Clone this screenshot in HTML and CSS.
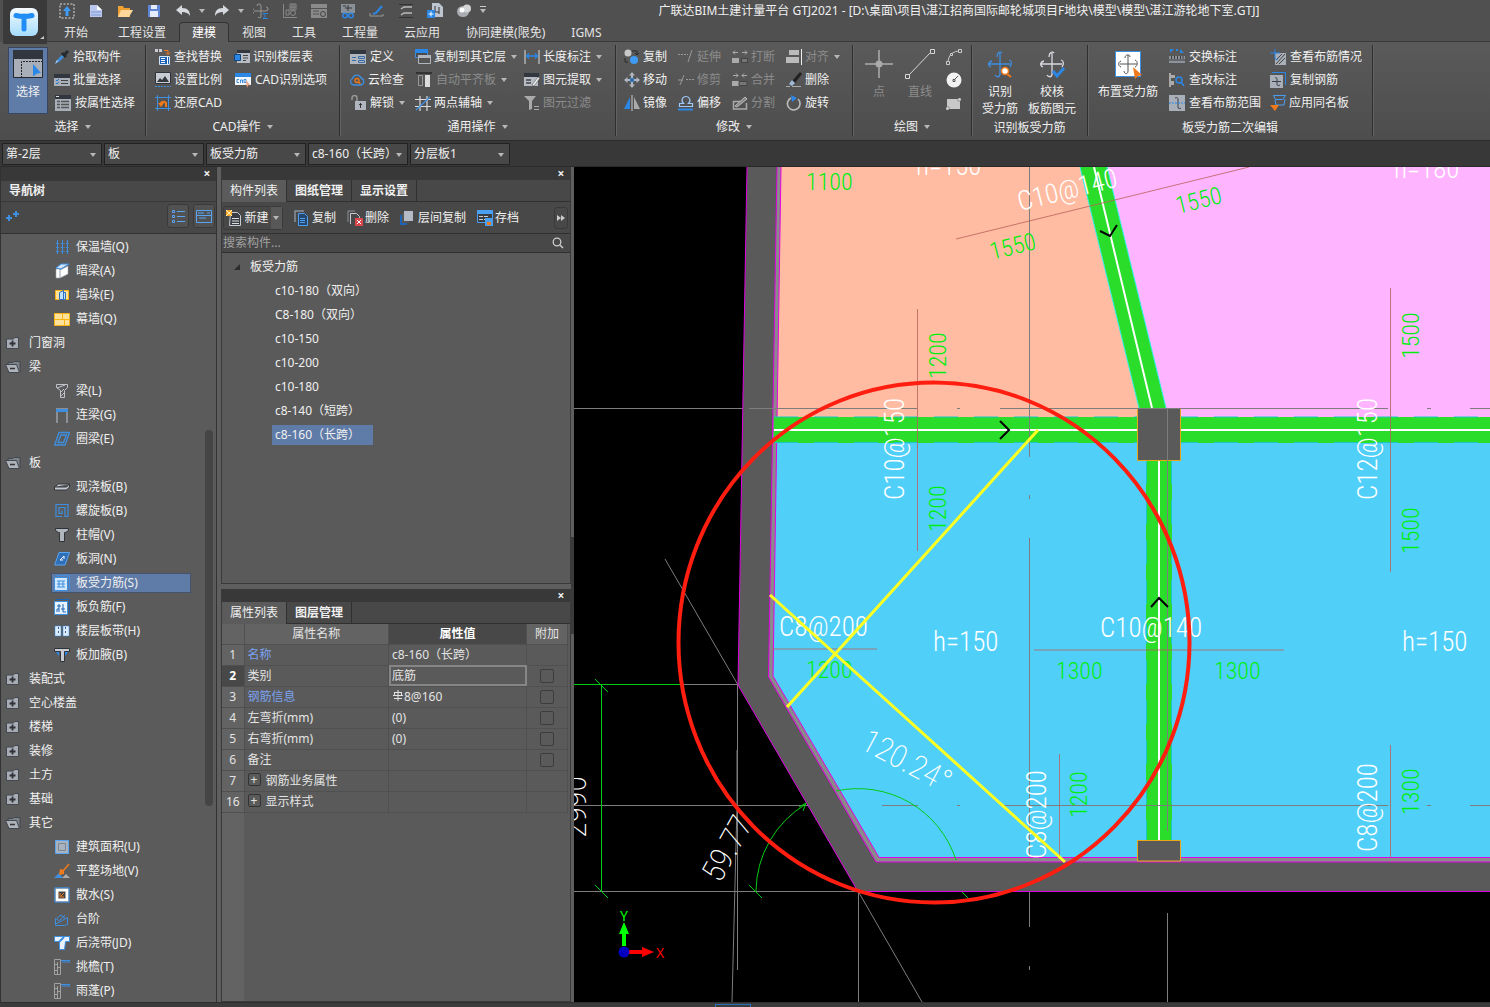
FILE: index.html
```html
<!DOCTYPE html>
<html lang="zh-CN">
<head>
  <meta charset="UTF-8">
  <meta name="viewport" content="width=device-width, initial-scale=1.0">
  <title>广联达BIM土建计量平台 GTJ2021</title>
  <link rel="stylesheet" href="styles.css">
</head>
<body>
  <!-- icon sprite -->
  <svg class="sprite" aria-hidden="true">
    <symbol id="i-pick" viewBox="0 0 16 16"><path d="M1 15l2-4 6-6 2 2-6 6z" fill="#3f8fe0"/><path d="M1 15l2-4 1 1z" fill="#ddd"/><path d="M8 4l4 4M10 6l4-4" stroke="#26292e" stroke-width="3"/></symbol>
    <symbol id="i-batch" viewBox="0 0 16 16"><path fill="#a9afb9" d="M0 2h16v12H0z"/><path fill="#32373f" d="M0 2h16v4H0z"/><path d="M2 8l1 1 2-2M2 11l1 1 2-2" stroke="#1d78d0" fill="none"/><path d="M7 8.500h7M7 11.500h7" stroke="#444"/></symbol>
    <symbol id="i-list" viewBox="0 0 16 16"><path fill="#a9afb9" d="M0 1h16v15H0z"/><path fill="#32373f" d="M0 0h16v4H0z"/><path d="M1 1.500h3" stroke="#ddd"/><path d="M2 6.500h3m1 0h8M2 9.500h3m1 0h8M2 12.500h3m1 0h8" stroke="#555" stroke-width="1.500"/></symbol>
    <symbol id="i-find" viewBox="0 0 16 16"><path fill="#c8ccd2" d="M0 0h3v3H0zm4 0h3v3H4z"/><path d="M9 1.500h4v4M11 3.500l2 2 2-2" stroke="#f07a1c" fill="none"/><path d="M4.500 7.500h10v8h-10z" fill="#1c63b5" stroke="#cfe3fa"/><path d="M6 9.500h4M6 11.500h4M6 13.500h4M12.500 8v7" stroke="#fff"/></symbol>
    <symbol id="i-scale" viewBox="0 0 16 16"><path fill="#c8ccd2" stroke="#2f343b" d="M.5.5h15v11H.5z"/><path d="M2 10l3-4 2 2 3-4 4 6z" fill="#33383f"/><path d="M0 14.500h16" stroke="#3f8fe0" stroke-dasharray="2 1"/></symbol>
    <symbol id="i-restore" viewBox="0 0 16 16"><path d="M2.500 0v16M13.500 0v16M0 2.500h16M0 13.500h16" stroke="#3f8fe0"/><path d="M11 12V8a3 3 0 0 0-5 0v2" stroke="#f07a1c" stroke-width="2" fill="none"/><path d="M3 8h6l-3 4z" fill="#f07a1c"/></symbol>
    <symbol id="i-floor" viewBox="0 0 16 16"><path fill="#b6bbc4" d="M3 2h13v12H3z"/><path fill="#32373f" d="M3 1h13v3H3z"/><path d="M9 6.500h5M9 9h5M9 11.500h3" stroke="#444"/><path fill="#2b87e6" stroke="#12467e" d="M.5 5.500h6v6h-6z"/></symbol>
    <symbol id="i-cad" viewBox="0 0 16 16"><path fill="#f1f4f8" d="M0 1h16v12H0z"/><path fill="#2b87e6" d="M0 1h16v4H0z"/><path d="M4 7.500H2v3h2M5.500 11V8h2v3M9 7.500v3h2v-3z" fill="none" stroke="#3f8fe0"/><path d="M11 8l4 5-2 .5L12 16z" fill="#f4a27a"/></symbol>
    <symbol id="i-define" viewBox="0 0 16 16"><path fill="#b0b5be" d="M0 2h16v13H0z"/><path fill="#32373f" d="M0 1h16v4H0z"/><path d="M2 8.500h4M2 11.500h4M8.500 7.500h6v2h-6zM8.500 11.500h6v2h-6z" fill="none" stroke="#3b6ea8"/></symbol>
    <symbol id="i-cloud" viewBox="0 0 16 16"><path d="M4 13a3.500 3.500 0 0 1-.5-6.500A4.500 4.500 0 0 1 12 6a3.600 3.600 0 0 1 0 7z" fill="none" stroke="#3f8fe0" stroke-width="1.300"/><circle cx="8" cy="8.500" r="2" fill="none" stroke="#f07a1c" stroke-width="1.300"/><path d="M9.500 10l2 2" stroke="#f07a1c" stroke-width="1.300"/></symbol>
    <symbol id="i-unlock" viewBox="0 0 16 16"><path d="M2 5V3a2 2 0 0 1 5 0v4" stroke="#999" fill="none" stroke-width="1.500"/><path fill="#b0b5be" d="M5 6h11v9H5z"/><path d="M10.500 8v5M9 9.500h3" stroke="#333"/></symbol>
    <symbol id="i-copyfloor" viewBox="0 0 16 16"><path d="M.5 1.500h12v7H.5z" fill="#4b4b4b" stroke="#3f8fe0"/><path fill="#2b87e6" d="M0 0h13v4H0z"/><path d="M3.500 6.500h12v8h-12z" fill="#555" stroke="#b0b5be"/><path fill="#b0b5be" d="M3 6h13v3H3z"/></symbol>
    <symbol id="i-align" viewBox="0 0 16 16"><path d="M0 1h16" stroke="#333" stroke-width="2"/><path d="M2.500 3.500h4v10h-4z" fill="none" stroke="#999"/><path fill="#ddd" d="M9 3h5v12H9z"/></symbol>
    <symbol id="i-axis" viewBox="0 0 16 16"><path d="M5 1v15M12 1v15M0 4.500h16M0 11.500h16" stroke="#ddd" stroke-width="1.200"/><path d="M1 15L15 2" stroke="#3f8fe0" stroke-width="1.300"/></symbol>
    <symbol id="i-length" viewBox="0 0 16 16"><path d="M1 1v14M15 1v14" stroke="#ddd"/><path d="M2 7h12M5 4.500L2.500 7 5 9.500M11 4.500L13.500 7 11 9.500" fill="none" stroke="#2b87e6" stroke-width="1.300"/></symbol>
    <symbol id="i-extract" viewBox="0 0 16 16"><path fill="#b6bbc4" d="M0 3h14v11H0z"/><path fill="#32373f" d="M0 1h15v4H0z"/><path d="M2 8h5M2 11h5" stroke="#444" stroke-width="1.500"/><path d="M8 13l6-8 2 1-6 8z" fill="#eee" stroke="#444" stroke-width=".5"/></symbol>
    <symbol id="i-filter" viewBox="0 0 16 16"><path fill="#aaa" d="M0 1h12L8 6v8l-3 1V6z"/><path d="M10 11.500h5M10 14.500h5" stroke="#aaa"/></symbol>
    <symbol id="i-copy2" viewBox="0 0 16 16"><circle cx="4" cy="4" r="3.500" fill="#c8c8c8"/><circle cx="10" cy="11" r="4" fill="#3e9bf4"/><path d="M8 2h5v4M11 4l2 2 2-2M1 9v4h3" fill="none" stroke="#2a2a2a"/></symbol>
    <symbol id="i-move" viewBox="0 0 16 16"><path fill="#b0b5be" d="M8 0l3 3.500H9V6H7V3.500H5zM8 16l3-3.500H9V10H7v2.500H5zM0 8l3.500-3v2H6v2H3.500v2zM16 8l-3.500-3v2H10v2h2.500v2z"/><path fill="none" stroke="#2b87e6" d="M6.500 6.500h3v3h-3z"/></symbol>
    <symbol id="i-mirror" viewBox="0 0 16 16"><path fill="#2b87e6" d="M6 2v12H0z"/><path fill="#aaa" d="M10 2v12h6z"/><path d="M8 0v16" stroke="#ccc"/></symbol>
    <symbol id="i-extend" viewBox="0 0 16 16"><path d="M0 5.500h10" stroke="#999" stroke-dasharray="2 1"/><path d="M10 13l4-12" stroke="#999"/></symbol>
    <symbol id="i-trim" viewBox="0 0 16 16"><path d="M8 7.500h8" stroke="#999" stroke-dasharray="2 1"/><path d="M2 13L6 3M0 8h5" stroke="#999"/></symbol>
    <symbol id="i-offset" viewBox="0 0 16 16"><path d="M1.500 11.500v-3h4c-3-3-1-7 2.500-7s5.500 4 2.500 7h4v3z" fill="none" stroke="#9ec9f8" stroke-width="1.200"/><path d="M0 14.500h15" stroke="#2b87e6" stroke-width="2"/></symbol>
    <symbol id="i-break" viewBox="0 0 16 16"><path fill="#aaa" d="M0 9h7v5H0z"/><path d="M9.500 9.500h6v4h-6z" fill="#777" stroke="#444"/><path d="M1 3.500h5M3 1.500l-2 2 2 2M10 3.500h5M13 1.500l2 2-2 2" stroke="#aaa" fill="none"/></symbol>
    <symbol id="i-merge" viewBox="0 0 16 16"><path fill="#aaa" d="M0 9h7v5H0z"/><path d="M7 9.500h8v4H7z" fill="#777" stroke="#444"/><path d="M1 3.500h5M4 1.500l2 2-2 2M10 3.500h5M12 1.500l-2 2 2 2" stroke="#aaa" fill="none"/></symbol>
    <symbol id="i-split" viewBox="0 0 16 16"><path d="M9 6.500H1.500v7.500h13V8" fill="none" stroke="#aaa" stroke-width="1.500"/><path d="M3 11l10-9 2 2-10 8z" fill="#888" stroke="#bbb"/></symbol>
    <symbol id="i-alignto" viewBox="0 0 16 16"><path fill="#bbb" d="M3 1h10v5H3zM0 8h13v6H0z"/><path d="M15.500 0v16" stroke="#eee"/></symbol>
    <symbol id="i-erase" viewBox="0 0 16 16"><path d="M6 9l8-9 2 2-7 9z" fill="#222"/><path d="M3 12l3-4 3 3-3 3z" fill="#9fb9d8"/><path d="M0 14.500h4m2 0h9" stroke="#aaa"/></symbol>
    <symbol id="i-rotate" viewBox="0 0 16 16"><path d="M5 3a6.300 6.300 0 1 0 7 1" fill="none" stroke="#bbb" stroke-width="1.600"/><path fill="#2b87e6" d="M5 0l6 3-5 4z"/></symbol>
    <symbol id="i-swap" viewBox="0 0 16 16"><path fill="#2b87e6" d="M1 0h4l-4 4zM11 0v4h4zM7 0h2v2H7z"/><path fill="#8d929b" d="M0 7h16v7H0z"/><path d="M2.500 7v3M5.500 7v3M8.500 7v3M11.500 7v3M14 7v3M0 11h16" stroke="#3c3c3c"/></symbol>
    <symbol id="i-check" viewBox="0 0 16 16"><path d="M1 1v14" stroke="#aaa" stroke-width="2"/><path fill="#aaa" d="M2 3h4v3H2zM2 9h3v4H2z"/><circle cx="10" cy="8" r="3" fill="none" stroke="#2b87e6" stroke-width="1.500"/><path d="M12 10l3 4" stroke="#2b87e6" stroke-width="1.500"/></symbol>
    <symbol id="i-range" viewBox="0 0 16 16"><path fill="#a9afb9" d="M0 0h16v16H0z"/><path d="M6 3c2-1 3 0 3 1v8c0 2 2 2 3 1" stroke="#3b4048" fill="none"/><path d="M0 8h16" stroke="#2b87e6" stroke-dasharray="2 1"/></symbol>
    <symbol id="i-state" viewBox="0 0 16 16"><path fill="#a9afb9" d="M5 4h11v12H5z"/><path d="M6 15l9-10M9 15l6-6M6 11l6-6" stroke="#444"/><path d="M5 0v9c0 2 2 2 3 1M0 4h10" stroke="#2b87e6" fill="none"/></symbol>
    <symbol id="i-copyrebar" viewBox="0 0 16 16"><path fill="#a9afb9" d="M0 3h13v13H0z"/><path d="M2 .5h13.500V13" stroke="#2b87e6" fill="none"/><path d="M5 6c1-1 2 0 2 1v5c0 2 1 2 3 1M2 9.500h9" stroke="#3b4048" fill="none"/></symbol>
    <symbol id="i-samename" viewBox="0 0 16 16"><path d="M3.500.5h12l-3 4h-7zM5 5l1 5h8l1-6" fill="none" stroke="#4b9ff2"/><path fill="#f07a1c" d="M0 10h9l-4 6z"/></symbol>
    <symbol id="i-open" viewBox="0 0 16 16"><path fill="#7d838c" stroke="#42464d" d="M3 3.500h5l1-1h6v11H4z"/><path fill="#aeb2ba" stroke="#42464d" d="M.5 5.500h11l3 8H4z"/><path d="M5 9.500h5" stroke="#333" stroke-width="1.500"/></symbol>
    <symbol id="i-closed" viewBox="0 0 16 16"><path fill="#a7acb5" stroke="#42464d" d="M1.500 4h7l1-1.500h4v11h-12z"/><path d="M7.500 5.500v6M4.500 8.500h6" stroke="#2f3339" stroke-width="1.800"/></symbol>
    <symbol id="i-wallq" viewBox="0 0 16 16"><path d="M3.500 1v14M8.500 1v14M13.500 1v14" stroke="#3f8fe0"/><path d="M2 4.500h13M2 8.500h13M2 12.500h13" stroke="#3f8fe0" stroke-dasharray="1 1.500"/></symbol>
    <symbol id="i-cube" viewBox="0 0 16 16"><path fill="#fff" stroke="#9aa3b0" stroke-width=".6" d="M2 6h4v9H2zM6 7l8-4v8l-8 4z"/><path fill="#cfe3fa" stroke="#3f8fe0" d="M2 5l5-4h8L7 6z"/></symbol>
    <symbol id="i-pier" viewBox="0 0 16 16"><path fill="#ffe29a" stroke="#fbb415" d="M1.500 3.500h13v9h-13z"/><path fill="#bfe0ff" stroke="#2b6fc0" d="M5.500 5.500l4-2v9h-4zM9.500 5.500h2v7h-2z"/></symbol>
    <symbol id="i-brick" viewBox="0 0 16 16"><path fill="#ffe29a" stroke="#fbb415" d="M.5 2.500h15v12H.5zM.5 8.500h15M8.500 2.500v6M10.500 8.500v6"/></symbol>
    <symbol id="i-beam" viewBox="0 0 16 16"><path fill="none" stroke="#c0c4ca" d="M2.500 1.500h11v3l-3 3v7h-4v-7l-4-3zM3 5l8-3M7 9l3-3M7 13l3-3"/></symbol>
    <symbol id="i-lintel" viewBox="0 0 16 16"><path fill="none" stroke="#8a9096" stroke-width="2" d="M3 16V2h10v14"/><path fill="#3f8fe0" d="M2 2h12v3H2z"/></symbol>
    <symbol id="i-ring" viewBox="0 0 16 16"><path fill="none" stroke="#3f8fe0" stroke-width="1.300" d="M5 1.500h10.500L11 14H.7zM7 4h5.500L9.500 11.500H4z"/></symbol>
    <symbol id="i-slab" viewBox="0 0 16 16"><path fill="#c4c8cf" stroke="#33373d" d="M.5 8l4-3h11v3l-3 3H.5zM.5 8h12l3-3"/></symbol>
    <symbol id="i-spiral" viewBox="0 0 16 16"><path fill="none" stroke="#3f8fe0" stroke-width="1.200" d="M8 13.500H2v-12h12v12h-3v-9H5v6h3v-3"/></symbol>
    <symbol id="i-cap" viewBox="0 0 16 16"><path fill="#b0b5be" stroke="#2f343b" d="M1.500 1.500h13v2l-3 2h-1v9h-5v-9h-1l-3-2z"/></symbol>
    <symbol id="i-hole" viewBox="0 0 16 16"><path fill="#2e6fb8" stroke="#5aa5f2" d="M5 1.500h10.500L11 14H.7z"/><path d="M6 9l4-4M6 9h3M10 5v3" stroke="#fff"/></symbol>
    <symbol id="i-main" viewBox="0 0 16 16"><path fill="#cfe7ff" stroke="#3f8fe0" d="M.5 2.500h13v13H.5z"/><path fill="none" stroke="#3f8fe0" d="M2 .5h13.500V14M3 6h8M3 9h8M3 12h8M5 6v6M9 6v6"/></symbol>
    <symbol id="i-neg" viewBox="0 0 16 16"><path fill="#e8f3ff" stroke="#3f8fe0" d="M.5 2.500h13v13H.5z"/><path fill="none" stroke="#1c63b5" d="M2 .5h13.500V14M5 5v8M9 5v8M3 7h4M7 10h4M3 13v-3h2M9 13h3"/></symbol>
    <symbol id="i-strip" viewBox="0 0 16 16"><path fill="#dcecff" stroke="#3f8fe0" stroke-width=".5" d="M1 3h6v10H1zM9 3h6v10H9z"/><path d="M4.500 4v8M11.500 4v8" stroke="#3f5f85" stroke-dasharray="2 2"/></symbol>
    <symbol id="i-haunch" viewBox="0 0 16 16"><path fill="#2b87e6" d="M1 4h4v5zM15 4h-4v5z"/><path fill="#c8ccd2" stroke="#2f343b" d="M.5 1.500h15v3h-5v10h-4v-10h-6z"/></symbol>
    <symbol id="i-area" viewBox="0 0 16 16"><path fill="#a9b3c0" stroke="#5aa5f2" d="M1.500 1.500h13v13h-13z"/><path fill="none" stroke="#7d8793" d="M4.500 4.500h7v7h-7z"/></symbol>
    <symbol id="i-ground" viewBox="0 0 16 16"><path fill="#3f8fe0" d="M0 15l5-5 4 5z"/><path fill="#aaa" d="M8 15l4-4 4 4z"/><path fill="#f07a1c" d="M6 6l4 1v4l-5 1z"/><path d="M9 8l6-7" stroke="#f07a1c" stroke-width="1.500"/></symbol>
    <symbol id="i-apron" viewBox="0 0 16 16"><path fill="#444" stroke="#fff" stroke-width="3" d="M3 3h10v10H3z"/><path fill="none" stroke="#3f8fe0" d="M.8.8h14.400v14.400H.8z"/><path d="M10 6l-3 3M6 6v4h4" stroke="#f07a1c" fill="none"/></symbol>
    <symbol id="i-step" viewBox="0 0 16 16"><path fill="none" stroke="#3f8fe0" d="M1.500 7.500l5 3 7-4v7l-3 1h-9zM3 7l4-3 4 3M6 9l5-5M1.500 13l5-2.500"/></symbol>
    <symbol id="i-post" viewBox="0 0 16 16"><path fill="#e8f3ff" stroke="#3f8fe0" d="M.5 1.500h15v5h-4l-1 8h-5v-8h-5z"/><path d="M5 7l5-5" stroke="#3f8fe0" stroke-width="2"/></symbol>
    <symbol id="i-eave" viewBox="0 0 16 16"><path fill="none" stroke="#a2a2a2" d="M.5.5h6v15h-6zM.5 5.500h3M3.500 3v12M3.500 8.500h3M.5 11.500h3"/><path d="M7 1.500h9v2M8 3h8" stroke="#3f8fe0" fill="none"/></symbol>
    <symbol id="i-new" viewBox="0 0 16 16"><path fill="#3a3e44" stroke="#c8ccd2" d="M4.500 2.500h7l3 3v10h-11z"/><path d="M6 8.500h7M6 11h7M6 13.500h7" stroke="#ddd"/><path fill="#f9a825" d="M0 0h6v6H0z"/><path d="M0 0l6 6M6 0L0 6" stroke="#fff2c4"/></symbol>
    <symbol id="i-copy" viewBox="0 0 16 16"><path d="M1 12V1h9" fill="none" stroke="#8b929c" stroke-width="1.500"/><path fill="#26466c" stroke="#4b9ff2" d="M4.500 3.500h6l3 3v9h-9z"/><path d="M6 8.500h5M6 10.500h5M6 12.500h5" stroke="#4b9ff2"/></symbol>
    <symbol id="i-del" viewBox="0 0 16 16"><path d="M1 12V1h7" fill="none" stroke="#8b929c"/><path d="M3.500 14V3.500h6l3 3V8" fill="none" stroke="#c8ccd2"/><path fill="#d9474c" d="M8 8h8v8H8z"/><path d="M10 10l4 4M14 10l-4 4" stroke="#fff"/></symbol>
    <symbol id="i-layer" viewBox="0 0 16 16"><path fill="#1c63b5" d="M0 5h7v10H0z"/><path fill="#555" d="M2 3h7v10H2z"/><path fill="#b4bac6" d="M4 1h9v10H4z"/></symbol>
    <symbol id="i-save" viewBox="0 0 16 16"><path fill="#3a3e44" stroke="#4b9ff2" d="M.5.5h15v12H.5z"/><path fill="#4b9ff2" d="M0 0h16v4H0z"/><path d="M2 6.500h4m1 0h4M2 9.500h4m1 0h4" stroke="#ccc"/><path fill="#4b9ff2" d="M8 8h8v8H8z"/><path fill="#f07a1c" d="M10 12h4v3h-4z"/></symbol>
  </svg>

  <header class="app-header">
    <div class="logo">
      <svg viewBox="0 0 44 44">
        <defs><linearGradient id="lg" x1="0" y1="0" x2="0" y2="1"><stop offset="0" stop-color="#f4fbff"/><stop offset="1" stop-color="#a5dcfb"/></linearGradient></defs>
        <rect x="7" y="8" width="28" height="28" rx="6" fill="url(#lg)"/>
        <path d="M13 15.500q8 2 16 0M21 16v13" stroke="#1f8df5" stroke-width="5" stroke-linecap="round" fill="none"/>
        <path d="M41 36v3h-4z" fill="#ccc"/>
      </svg>
    </div>
    <div class="head-main">
      <div class="titlebar">
        <div class="quick">
          <button aria-label="上传"><svg viewBox="0 0 16 16"><path d="M1 1h14v14H1z" fill="none" stroke="#ddd" stroke-dasharray="2 1.500"/><path fill="#3e9bf4" d="M8 3l4 5H9.500v5h-3V8H4z"/></svg></button>
          <button aria-label="新建"><svg viewBox="0 0 16 16"><path fill="#b9c8ec" d="M2 2h7l5 5v7H2z"/><path fill="#fff" d="M9 2v5h5z"/><path d="M3 9h10M3 12h10" stroke="#7d97d6"/></svg></button>
          <button aria-label="打开"><svg viewBox="0 0 16 16"><path fill="#f0a030" d="M1 3h5l1 2h6v9H1z"/><path fill="#ffd79a" d="M4 7h12l-4 7H1z"/></svg></button>
          <button aria-label="保存"><svg viewBox="0 0 16 16"><path fill="#5f86d8" d="M2 2h12v12H2z"/><path fill="#e6ecfb" d="M5 2h6v4H5zM4 8h8v6H4z"/></svg></button>
          <button aria-label="撤销"><svg viewBox="0 0 16 16"><path fill="#d6d9de" d="M1 7l6-5v3c6 0 8 3 8 8-2-3-4-4-8-4v3z"/></svg></button>
          <i class="caret"></i>
          <button aria-label="重做"><svg viewBox="0 0 16 16"><path fill="#d6d9de" d="M15 7L9 2v3c-6 0-8 3-8 8 2-3 4-4 8-4v3z"/></svg></button>
          <i class="caret"></i>
          <button aria-label="汇总"><svg viewBox="0 0 16 16"><path d="M4 3a2 2 0 0 1 4 0v11a2 2 0 0 1-3 0M1 6a2 2 0 0 0 0 4M1 8h12a2 2 0 0 0 0-4" fill="none" stroke="#999"/><path d="M15 10.500h-5l2.500 2.500-2.500 2.500h5" fill="none" stroke="#2b87e6"/></svg></button>
          <button aria-label="查量"><svg viewBox="0 0 16 16"><path d="M1.500 1v13.500H15M4 7h3v5H4zM8 1h6v6H8zM10 1v6M12 1v6M8 4h6" fill="none" stroke="#888"/><circle cx="11" cy="10" r="2.500" fill="none" stroke="#888"/></svg></button>
          <button aria-label="报表"><svg viewBox="0 0 16 16"><path fill="#8a8a8a" d="M0 1h16v4H0zM0 6h16v9H0z"/><path d="M2 8h6M2 11h6" stroke="#555"/><circle cx="12" cy="11" r="2.500" fill="none" stroke="#444"/></svg></button>
          <button aria-label="查看"><svg viewBox="0 0 16 16"><path fill="#8a9098" d="M1 1h14v9H1z"/><path d="M3 3h3M8 2v6M5 5h7" stroke="#333"/><circle cx="5" cy="12.500" r="2.300" fill="none" stroke="#2b87e6" stroke-width="1.500"/><circle cx="11" cy="12.500" r="2.300" fill="none" stroke="#2b87e6" stroke-width="1.500"/></svg></button>
          <button aria-label="绘制"><svg viewBox="0 0 16 16"><path d="M13 3l-6 7-3 1" fill="none" stroke="#2b87e6" stroke-width="2"/><path d="M1 10v3h13v-2" stroke="#999" fill="none"/></svg></button>
          <button aria-label="对比"><svg viewBox="0 0 16 16"><path d="M1 1.500h14M1 14.500h14" stroke="#333"/><path d="M3 6l3-2h8M3 12l3-2h8" stroke="#bbb" stroke-width="1.500" fill="none"/></svg></button>
          <button aria-label="添加"><svg viewBox="0 0 16 16"><path fill="#bfc5d0" d="M5 0h7l4 4v10H5z"/><path d="M8 3v6h4M12 4v7" stroke="#333" fill="none"/><path fill="#2b87e6" d="M0 7h8v8H0z"/><path d="M4 8.500v5M1.500 11h5" stroke="#fff"/></svg></button>
          <button aria-label="渲染"><svg viewBox="0 0 16 16"><ellipse cx="7" cy="8.500" rx="6" ry="5.500" fill="#a9acb0"/><circle cx="11" cy="5.500" r="4" fill="#d2d4d6"/><circle cx="6" cy="7" r="2.500" fill="#fff"/></svg></button>
          <i class="caret lined"></i>
        </div>
        <h1>广联达BIM土建计量平台 GTJ2021 - [D:\桌面\项目\湛江招商国际邮轮城项目F地块\模型\模型\湛江游轮地下室.GTJ]</h1>
      </div>
      <nav class="tabs">
        <a href="#" class="file-tab">开始</a>
        <a href="#">工程设置</a>
        <a href="#" class="active">建模</a>
        <a href="#">视图</a>
        <a href="#">工具</a>
        <a href="#">工程量</a>
        <a href="#">云应用</a>
        <a href="#">协同建模(限免)</a>
        <a href="#">IGMS</a>
      </nav>
    </div>
  </header>

  <div class="ribbon">
    <section class="group g-select">
      <div class="group-body">
        <button class="big selected"><svg viewBox="0 0 30 30"><path fill="#a9afb9" stroke="#26292e" d="M.5 1.500h29v27H.5z"/><path fill="#32373f" d="M0 1h30v9H0z"/><path d="M8.500 29V12.500H29" stroke="#222" stroke-dasharray="2 1" fill="none"/><path fill="#2b87e6" d="M20 15l8 9-4 .5-4 3z"/></svg>选择</button>
        <div class="col">
          <button class="tool"><svg><use href="#i-pick"/></svg>拾取构件</button>
          <button class="tool"><svg><use href="#i-batch"/></svg>批量选择</button>
          <button class="tool lg"><svg><use href="#i-list"/></svg>按属性选择</button>
        </div>
      </div>
      <h2>选择 <i class="caret"></i></h2>
    </section>
    <section class="group g-cad">
      <div class="group-body">
        <div class="col">
          <button class="tool"><svg><use href="#i-find"/></svg>查找替换</button>
          <button class="tool"><svg><use href="#i-scale"/></svg>设置比例</button>
          <button class="tool"><svg><use href="#i-restore"/></svg>还原CAD</button>
        </div>
        <div class="col">
          <button class="tool"><svg><use href="#i-floor"/></svg>识别楼层表</button>
          <button class="tool lg"><svg><use href="#i-cad"/></svg>CAD识别选项</button>
        </div>
      </div>
      <h2>CAD操作 <i class="caret"></i></h2>
    </section>
    <section class="group g-common">
      <div class="group-body">
        <div class="col">
          <button class="tool lg"><svg><use href="#i-define"/></svg>定义</button>
          <button class="tool"><svg><use href="#i-cloud"/></svg>云检查</button>
          <button class="tool lg"><svg><use href="#i-unlock"/></svg>解锁<i class="caret"></i></button>
        </div>
        <div class="col">
          <button class="tool"><svg><use href="#i-copyfloor"/></svg>复制到其它层<i class="caret"></i></button>
          <button class="tool lg" disabled><svg><use href="#i-align"/></svg>自动平齐板<i class="caret"></i></button>
          <button class="tool"><svg><use href="#i-axis"/></svg>两点辅轴<i class="caret"></i></button>
        </div>
        <div class="col">
          <button class="tool"><svg><use href="#i-length"/></svg>长度标注<i class="caret"></i></button>
          <button class="tool"><svg><use href="#i-extract"/></svg>图元提取<i class="caret"></i></button>
          <button class="tool" disabled><svg><use href="#i-filter"/></svg>图元过滤</button>
        </div>
      </div>
      <h2>通用操作 <i class="caret"></i></h2>
    </section>
    <section class="group g-modify">
      <div class="group-body">
        <div class="col">
          <button class="tool"><svg><use href="#i-copy2"/></svg>复制</button>
          <button class="tool"><svg><use href="#i-move"/></svg>移动</button>
          <button class="tool"><svg><use href="#i-mirror"/></svg>镜像</button>
        </div>
        <div class="col">
          <button class="tool" disabled><svg><use href="#i-extend"/></svg>延伸</button>
          <button class="tool" disabled><svg><use href="#i-trim"/></svg>修剪</button>
          <button class="tool"><svg><use href="#i-offset"/></svg>偏移</button>
        </div>
        <div class="col">
          <button class="tool" disabled><svg><use href="#i-break"/></svg>打断</button>
          <button class="tool" disabled><svg><use href="#i-merge"/></svg>合并</button>
          <button class="tool" disabled><svg><use href="#i-split"/></svg>分割</button>
        </div>
        <div class="col">
          <button class="tool" disabled><svg><use href="#i-alignto"/></svg>对齐<i class="caret"></i></button>
          <button class="tool"><svg><use href="#i-erase"/></svg>删除</button>
          <button class="tool"><svg><use href="#i-rotate"/></svg>旋转</button>
        </div>
      </div>
      <h2>修改 <i class="caret"></i></h2>
    </section>
    <section class="group g-draw">
      <div class="group-body">
        <button class="big" disabled><svg viewBox="0 0 30 30"><path d="M15 1v28M1 15h28" stroke="#d8d8d8"/><circle cx="15" cy="15" r="3.500" fill="#aaa"/></svg>点</button>
        <button class="big" disabled><svg viewBox="0 0 30 30"><path d="M3 27L26 3" stroke="#d8d8d8"/><path d="M.5 25.500h4v4h-4zM25.500.5h4v4h-4z" fill="#555" stroke="#d8d8d8"/></svg>直线</button>
        <div class="col">
          <button class="tool" aria-label="弧线"><svg viewBox="0 0 16 16"><path d="M2 14C2 6 7 2 14 2" fill="none" stroke="#ccc"/><path fill="#555" stroke="#ccc" d="M.5 12.500h3v3h-3zM12.500.5h3v3h-3zM4.500 4.500h2v2h-2z"/></svg></button>
          <button class="tool" aria-label="圆"><svg viewBox="0 0 16 16"><circle cx="8" cy="8" r="7.500" fill="#f2f2f2"/><path d="M8 8l4-4M7 7.500h2v2H7z" stroke="#555" fill="none"/></svg></button>
          <button class="tool" aria-label="矩形"><svg viewBox="0 0 16 16"><path fill="#c8c8c8" d="M1 4h13v10H1z"/><path fill="#ddd" stroke="#555" stroke-width=".5" d="M0 12h3v3H0zM12 3h3v3h-3z"/></svg></button>
        </div>
      </div>
      <h2>绘图 <i class="caret"></i></h2>
    </section>
    <section class="group g-ident">
      <div class="group-body">
        <button class="big"><svg viewBox="0 0 30 30"><path d="M12 8c0-5 4-6 5-4M15 4v21c0 4-4 3-5 1M7 12c-4 1-4 5-1 6M3 15h22M24 11c3 1 3 4 1 7" fill="none" stroke="#3f8fe0" stroke-width="1.300"/><circle cx="20" cy="22" r="3.500" fill="#fff" stroke="#f07a1c" stroke-width="1.500"/><path d="M22 25l4 3" stroke="#f07a1c" stroke-width="2"/></svg>识别<br>受力筋</button>
        <button class="big"><svg viewBox="0 0 30 30"><path d="M12 8c0-5 4-6 5-4M15 4v21c0 4-4 3-5 1M7 12c-4 1-4 5-1 6M3 15h22M24 11c3 1 3 4 1 7" fill="none" stroke="#d8d8e0" stroke-width="1.300"/><path d="M16 22l4 5 7-8" fill="none" stroke="#2b87e6" stroke-width="3"/></svg>校核<br>板筋图元</button>
      </div>
      <h2>识别板受力筋</h2>
    </section>
    <section class="group g-edit">
      <div class="group-body">
        <button class="big"><svg viewBox="0 0 30 30"><path d="M2.500 2.500h25v25h-25z" fill="#fff" stroke="#3f8fe0"/><path d="M12 9c0-4 5-4 5-1M15 6v16c0 4-4 3-4 0M8 12c-3 1-3 5 0 6M7 15h17M22 11c3 1 3 6 0 7" fill="none" stroke="#555"/><path fill="#f07a1c" d="M20 18l9 8-4 1-3 3z"/></svg>布置受力筋</button>
        <div class="col">
          <button class="tool wide"><svg><use href="#i-swap"/></svg>交换标注</button>
          <button class="tool wide"><svg><use href="#i-check"/></svg>查改标注</button>
          <button class="tool wide"><svg><use href="#i-range"/></svg>查看布筋范围</button>
        </div>
        <div class="col">
          <button class="tool wide"><svg><use href="#i-state"/></svg>查看布筋情况</button>
          <button class="tool wide"><svg><use href="#i-copyrebar"/></svg>复制钢筋</button>
          <button class="tool"><svg><use href="#i-samename"/></svg>应用同名板</button>
        </div>
      </div>
      <h2>板受力筋二次编辑</h2>
    </section>
  </div>

  <div class="selectors">
    <label class="sel"><select aria-label="楼层"><option>第-2层</option></select></label>
    <label class="sel"><select aria-label="构件类别"><option>板</option></select></label>
    <label class="sel"><select aria-label="构件类型"><option>板受力筋</option></select></label>
    <label class="sel"><select aria-label="构件"><option>c8-160（长跨）</option></select></label>
    <label class="sel"><select aria-label="分层"><option>分层板1</option></select></label>
  </div>

  <main class="workspace">
    <aside class="nav-panel">
      <div class="caption"><button aria-label="关闭">×</button></div>
      <h3 class="nav-title">导航树</h3>
      <div class="nav-tools">
        <button aria-label="展开"><svg viewBox="0 0 16 16"><path d="M4 7v6M1 10h6M11 3v6M8 6h6" stroke="#3f8fe0" stroke-width="2"/></svg></button>
        <span class="spacer"></span>
        <button class="framed" aria-label="列表"><svg viewBox="0 0 16 16"><path d="M2.500 2.500h2v2h-2zM2.500 7.500h2v2h-2zM2.500 12.500h2v2h-2zM7 3.500h8M7 8.500h8M7 13.500h8" fill="none" stroke="#5aa5f2"/></svg></button>
        <button class="framed" aria-label="窗口"><svg viewBox="0 0 16 16"><path d="M.5 2.500h15v12H.5zM.5 7.500h15M3 4v2M5 4v2M7 4v2M11 5h3M3 10h7" fill="none" stroke="#5aa5f2"/></svg></button>
      </div>
      <ul class="tree">
        <li class="leaf"><svg><use href="#i-wallq"/></svg><span>保温墙(Q)</span></li>
        <li class="leaf"><svg><use href="#i-cube"/></svg><span>暗梁(A)</span></li>
        <li class="leaf"><svg><use href="#i-pier"/></svg><span>墙垛(E)</span></li>
        <li class="leaf"><svg><use href="#i-brick"/></svg><span>幕墙(Q)</span></li>
        <li><svg><use href="#i-closed"/></svg><span>门窗洞</span></li>
        <li><svg><use href="#i-open"/></svg><span>梁</span></li>
        <li class="leaf"><svg><use href="#i-beam"/></svg><span>梁(L)</span></li>
        <li class="leaf"><svg><use href="#i-lintel"/></svg><span>连梁(G)</span></li>
        <li class="leaf"><svg><use href="#i-ring"/></svg><span>圈梁(E)</span></li>
        <li><svg><use href="#i-open"/></svg><span>板</span></li>
        <li class="leaf"><svg><use href="#i-slab"/></svg><span>现浇板(B)</span></li>
        <li class="leaf"><svg><use href="#i-spiral"/></svg><span>螺旋板(B)</span></li>
        <li class="leaf"><svg><use href="#i-cap"/></svg><span>柱帽(V)</span></li>
        <li class="leaf"><svg><use href="#i-hole"/></svg><span>板洞(N)</span></li>
        <li class="leaf current"><svg><use href="#i-main"/></svg><span>板受力筋(S)</span></li>
        <li class="leaf"><svg><use href="#i-neg"/></svg><span>板负筋(F)</span></li>
        <li class="leaf"><svg><use href="#i-strip"/></svg><span>楼层板带(H)</span></li>
        <li class="leaf"><svg><use href="#i-haunch"/></svg><span>板加腋(B)</span></li>
        <li><svg><use href="#i-closed"/></svg><span>装配式</span></li>
        <li><svg><use href="#i-closed"/></svg><span>空心楼盖</span></li>
        <li><svg><use href="#i-closed"/></svg><span>楼梯</span></li>
        <li><svg><use href="#i-closed"/></svg><span>装修</span></li>
        <li><svg><use href="#i-closed"/></svg><span>土方</span></li>
        <li><svg><use href="#i-closed"/></svg><span>基础</span></li>
        <li><svg><use href="#i-open"/></svg><span>其它</span></li>
        <li class="leaf"><svg><use href="#i-area"/></svg><span>建筑面积(U)</span></li>
        <li class="leaf"><svg><use href="#i-ground"/></svg><span>平整场地(V)</span></li>
        <li class="leaf"><svg><use href="#i-apron"/></svg><span>散水(S)</span></li>
        <li class="leaf"><svg><use href="#i-step"/></svg><span>台阶</span></li>
        <li class="leaf"><svg><use href="#i-post"/></svg><span>后浇带(JD)</span></li>
        <li class="leaf"><svg><use href="#i-eave"/></svg><span>挑檐(T)</span></li>
        <li class="leaf"><svg><use href="#i-eave"/></svg><span>雨蓬(P)</span></li>
      </ul>
      <div class="thumb"></div>
    </aside>

    <div class="mid">
      <section class="panel comp-panel">
        <div class="caption"><button aria-label="关闭">×</button></div>
        <div class="panel-tabs"><button class="active">构件列表</button><button>图纸管理</button><button>显示设置</button></div>
        <div class="comp-tools">
          <button class="new-btn"><svg><use href="#i-new"/></svg>新建<span class="drop"><i class="caret"></i></span></button>
          <button><svg><use href="#i-copy"/></svg>复制</button>
          <button><svg><use href="#i-del"/></svg>删除</button>
          <button><svg><use href="#i-layer"/></svg>层间复制</button>
          <button><svg><use href="#i-save"/></svg>存档</button>
          <button class="more" aria-label="更多"><svg viewBox="0 0 8 8"><path fill="#ccc" d="M0 1l4 3-4 3zM4 1l4 3-4 3z"/></svg></button>
        </div>
        <div class="search">
          <input type="text" placeholder="搜索构件..." aria-label="搜索构件">
          <svg viewBox="0 0 12 12"><circle cx="5" cy="5" r="3.800" fill="none" stroke="#ccc" stroke-width="1.300"/><path d="M8 8l3 3" stroke="#ccc" stroke-width="1.500"/></svg>
        </div>
        <ul class="comp-list">
          <li class="root"><svg viewBox="0 0 8 8"><path d="M7 1v6H1z" fill="#2c2c2c"/></svg>板受力筋</li>
          <li><span>c10-180（双向）</span></li>
          <li><span>C8-180（双向）</span></li>
          <li><span>c10-150</span></li>
          <li><span>c10-200</span></li>
          <li><span>c10-180</span></li>
          <li><span>c8-140（短跨）</span></li>
          <li class="current"><span>c8-160（长跨）</span></li>
        </ul>
      </section>

      <section class="panel prop-panel">
        <div class="caption"><button aria-label="关闭">×</button></div>
        <div class="panel-tabs"><button class="active">属性列表</button><button>图层管理</button></div>
        <div class="prop-body">
          <table>
            <thead><tr><th class="num"></th><th>属性名称</th><th class="strong">属性值</th><th class="extra">附加</th></tr></thead>
            <tbody>
              <tr><th class="num">1</th><td class="blue">名称</td><td>c8-160（长跨）</td><td></td></tr>
              <tr class="current"><th class="num">2</th><td>类别</td><td class="edit">底筋</td><td><input type="checkbox" aria-label="类别附加"></td></tr>
              <tr><th class="num">3</th><td class="blue">钢筋信息</td><td><svg class="steel" viewBox="0 0 10 12"><path d="M5 0v11M0 5.500h10M1 8.500h8M1.500 2v4M8.500 2v4M1.500 2.500h7" fill="none" stroke="#e4e4e4"/></svg>8@160</td><td><input type="checkbox" aria-label="钢筋信息附加"></td></tr>
              <tr><th class="num">4</th><td>左弯折(mm)</td><td>(0)</td><td><input type="checkbox" aria-label="左弯折附加"></td></tr>
              <tr><th class="num">5</th><td>右弯折(mm)</td><td>(0)</td><td><input type="checkbox" aria-label="右弯折附加"></td></tr>
              <tr><th class="num">6</th><td>备注</td><td></td><td><input type="checkbox" aria-label="备注附加"></td></tr>
              <tr><th class="num">7</th><td><button class="plus">+</button>钢筋业务属性</td><td></td><td></td></tr>
              <tr><th class="num">16</th><td><button class="plus">+</button>显示样式</td><td></td><td></td></tr>
            </tbody>
          </table>
        </div>
      </section>
    </div>

    <div class="splitter"></div>

    <!-- drawing area -->
    <svg class="canvas" viewBox="574 167 916 835" preserveAspectRatio="xMinYMin slice">
      <rect x="574" y="167" width="916" height="835" fill="#000"/>
      <g class="grid">
        <path d="M574 805.500h308M574 891.500h284M737.500 685v285M737 750v55L732 1002M858.500 891v111M665 559l73 126M858 891l64 111M1167.500 913v89M1029.500 891v36M1029.500 966v4M574 408.500h175M683 684.500h55"/>
      </g>
      <path d="M780 167h315l60 250H775z" fill="#ffbca2"/>
      <path d="M1095 167h395v250h-335z" fill="#ffb4ff"/>
      <path d="M774 442h716v416H878L772 677z" fill="#50d0f9"/>
      <path d="M747 167L738 685 858 892H1490V862H876L768.500 677 777 167z" fill="#5a5a5a"/>
      <path d="M777 167L768.500 677 876 862H1490V857H879L773 676 781 167z" fill="#8a8a8a"/>
      <path d="M747 167L738 685 858 891.500H1490M777 167L768.500 677 876 862H1490M781 167L773 676 879 857.500H1490" fill="none" stroke="#e400e4"/>
      <!-- beams -->
      <path d="M774 417h716v26H774zM1080 167h27l59 241h-27zM1146 460h26v380h-26z" fill="#2bdd2b"/>
      <path d="M1080 167l59 241M1107 167l59 241" stroke="#2ff0e8"/>
      <path d="M774 417h716M774 442.500h716M1146.500 460v380M1171.500 460v380" stroke="#19c8c0" stroke-dasharray="24 16"/>
      <path d="M774 430h716M1094 167l58 241M1159 460v380" stroke="#fff" stroke-width="2"/>
      <path d="M1137.500 408.500h43v52h-43zM1137.500 840.500h43V861h-43z" fill="#5a5a5a" stroke="#e8a818"/>
      <g class="grid">
        <path d="M749 408.500h168M957 408.500h3M1000 408.500h388M1427 408.500h4M1470 408.500h20"/>
        <path d="M882 805.500h36M957 805.500h3M1000 805.500h388M1427 805.500h4M1470 805.500h20"/>
        <path d="M1029.500 167v290M1029.500 495v4M1029.500 538v319M1167.500 408v423"/>
      </g>
      <path d="M1000 421l9 9-9 9M1151 607l8-9 9 9M1100 231l10 5 7-11" fill="none" stroke="#000" stroke-width="2"/>
      <path class="rebar" d="M956 239l293-72M917.500 309v242M1390.500 288v284M1390.500 745v112M1059.500 754v106M773 649h104M1034 650h250"/>
      <g class="dim">
        <path d="M574 684.500h109M601.500 685v207M595 679l13 13M595 885l13 13M749 885l13 13M962 892l6 6M803 811l3-8-7 4"/>
        <path d="M836 791a103 103 0 0 1 120 69M806 804a103 103 0 0 0-50 87"/>
      </g>
      <g class="note green">
        <text x="806" y="190">1100</text>
        <text transform="translate(992 260) rotate(-14)">1550</text>
        <text transform="translate(1178 214) rotate(-14)">1550</text>
        <text transform="translate(946 379) rotate(-90)">1200</text>
        <text transform="translate(946 532) rotate(-90)">1200</text>
        <text transform="translate(1419 359) rotate(-90)">1500</text>
        <text transform="translate(1419 554) rotate(-90)">1500</text>
        <text transform="translate(1419 815) rotate(-90)">1300</text>
        <text transform="translate(1087 818) rotate(-90)">1200</text>
        <text x="806" y="678">1200</text>
        <text x="1056" y="679">1300</text>
        <text x="1214" y="679">1300</text>
      </g>
      <g class="note white">
        <text x="916" y="175">h=150</text>
        <text x="1394" y="178">h=180</text>
        <text transform="translate(1020 211) rotate(-14)">C10@140</text>
        <text transform="translate(904 500) rotate(-90)">C10@150</text>
        <text transform="translate(1377 500) rotate(-90)">C12@150</text>
        <text transform="translate(1377 852) rotate(-90)">C8@200</text>
        <text transform="translate(1046 859) rotate(-90)">C8@200</text>
        <text x="779" y="636">C8@200</text>
        <text x="1100" y="637">C10@140</text>
        <text x="933" y="651">h=150</text>
        <text x="1402" y="651">h=150</text>
      </g>
      <g class="note big-note white">
        <text transform="translate(859 748) rotate(28)">120.24°</text>
        <text transform="translate(720 884) rotate(-61)">59.77</text>
        <text transform="translate(586 838) rotate(-90)">2990</text>
      </g>
      <path d="M1038 430L787 707M770 595l295 267" stroke="#ff2" stroke-width="3"/>
      <ellipse cx="934" cy="642.500" rx="255.500" ry="260" fill="none" stroke="#ff1e10" stroke-width="4"/>
      <!-- axis marker -->
      <path d="M624 946v-14" stroke="#0f0" stroke-width="4"/><path d="M624 922l5 12h-10z" fill="#0f0"/>
      <path d="M629 952h14" stroke="#f00" stroke-width="4"/><path d="M654 952l-12-5v10z" fill="#f00"/>
      <circle cx="624" cy="952" r="5.500" fill="#0000c0"/>
      <text class="axis" x="620" y="921" fill="#0f0">Y</text>
      <text class="axis" x="656" y="958" fill="#f00">X</text>
    </svg>
  </main>
  <footer class="status"><span></span></footer>
</body>
</html>
```
FILE: styles.css
```css
* {
  box-sizing: border-box;
}
body {
  margin: 0;
  height: 100vh;
  display: flex;
  flex-direction: column;
  overflow: hidden;
  background: #383838;
  color: #f0f0f0;
  font: 12px/16px "Noto Sans", "Noto Sans CJK SC", sans-serif;
}
button, input, select {
  font: inherit;
  color: inherit;
  background: none;
  border: none;
  padding: 0;
  margin: 0;
}
h1, h2, h3, ul {
  margin: 0;
  padding: 0;
  font-size: 12px;
  font-weight: normal;
  list-style: none;
}
a {
  color: inherit;
  text-decoration: none;
}
svg {
  display: block;
  flex: none;
}
.sprite {
  display: none;
}
.caret {
  display: inline-block;
  flex: none;
  width: 0;
  border: 3px solid transparent;
  border-top: 4px solid #b8b8b8;
  border-bottom: 0;
}

/* header */
.app-header {
  display: flex;
  height: 42px;
  padding-left: 3px;
  background: #505050;
}
.logo {
  width: 44px;
  height: 44px;
  background: #3a3a3a;
  position: relative;
}
.logo svg {
  width: 44px;
  height: 44px;
}
.head-main {
  flex: 1;
}
.titlebar {
  display: flex;
  height: 22px;
  align-items: center;
}
.titlebar h1 {
  flex: 1;
  text-align: center;
  padding-right: 60px;
  white-space: nowrap;
}
.quick {
  display: flex;
  align-items: center;
  padding-left: 5px;
}
.quick button {
  width: 29px;
  display: flex;
  justify-content: center;
}
.quick svg {
  width: 16px;
  height: 16px;
}
.quick .caret {
  margin: 0 2px;
}
.quick .lined {
  box-sizing: content-box;
  position: relative;
}
.quick .lined::before {
  content: "";
  position: absolute;
  left: -3px;
  top: -7px;
  width: 6px;
  height: 1px;
  background: #ccc;
}
.tabs {
  display: flex;
  height: 20px;
  padding-left: 4px;
  line-height: 19px;
  border-bottom: 1px solid #3a3a3a;
}
.tabs a {
  padding: 0 12px;
  border: 1px solid transparent;
  border-bottom: 0;
  height: 20px;
  color: #e4e4e4;
}
.tabs .file-tab {
  margin-right: 4px;
}
.tabs .active {
  color: #fff;
  background: #5a5a5a;
  border-color: #333;
  border-radius: 4px 4px 0 0;
}

/* ribbon */
.ribbon {
  display: flex;
  height: 99px;
  padding-top: 3px;
  background: linear-gradient(#5a5a5a, #4d4d4d);
  border-bottom: 1px solid #2c2c2c;
}
.group {
  display: flex;
  flex-direction: column;
  height: 91px;
  border-right: 1px solid #2f2f2f;
  box-shadow: 1px 0 0 #626262;
}
.group-body {
  height: 74px;
  display: flex;
}
.group h2 {
  display: flex;
  align-items: center;
  justify-content: center;
  gap: 6px;
}
.col {
  display: flex;
  flex-direction: column;
}
.tool {
  display: flex;
  align-items: center;
  gap: 3px;
  height: 23px;
  white-space: nowrap;
}
.tool svg {
  width: 16px;
  height: 16px;
}
.tool.lg svg {
  width: 18px;
}
.tool.wide {
  gap: 4px;
}
.tool .caret {
  margin-left: 2px;
}
button:disabled {
  color: #8c8c8c;
}
.big {
  display: flex;
  flex-direction: column;
  align-items: center;
  justify-content: flex-start;
  padding-top: 4px;
  gap: 4px;
  line-height: 17px;
}
.big svg {
  width: 30px;
  height: 30px;
}
.big.selected {
  width: 40px;
  height: 67px;
  margin: 2px 6px 0 8px;
  padding-top: 1px;
  border: 1px solid #3a4660;
  background: #5f7ba8;
}
.g-select { width: 146px; }
.g-cad { width: 194px; }
.g-cad .group-body {
  padding-left: 9px;
  display: grid;
  grid-template-columns: 79px auto;
}
.g-common { width: 276px; }
.g-common .group-body {
  padding-left: 9px;
  display: grid;
  grid-template-columns: 66px 109px auto;
}
.g-modify { width: 237px; }
.g-modify .group-body {
  padding-left: 8px;
  display: grid;
  grid-template-columns: repeat(4, 54px);
}
.g-draw { width: 119px; }
.g-draw .group-body {
  padding-left: 11px;
  display: grid;
  grid-template-columns: 30px 52px auto;
}
.g-ident { width: 116px; }
.g-ident .group-body {
  padding-left: 2px;
  display: grid;
  grid-template-columns: 52px 52px;
}
.g-edit { width: 285px; }
.g-edit .group-body {
  padding-left: 9px;
  display: grid;
  grid-template-columns: 62px 101px auto;
}
.g-edit .col {
  padding-left: 10px;
}
.g-ident h2, .g-edit h2 {
  padding-top: 2px;
}

/* selector bar */
.selectors {
  display: flex;
  gap: 2px;
  height: 26px;
  padding: 2px;
  border-bottom: 1px solid #2a2a2a;
}
.sel {
  position: relative;
  width: 100px;
  height: 22px;
  border: 1px solid #222;
  background: #484848;
}
.sel select {
  appearance: none;
  width: 100%;
  height: 20px;
  padding-left: 3px;
}
.sel::after {
  content: "";
  position: absolute;
  right: 5px;
  top: 9px;
  border: 3px solid transparent;
  border-top: 4px solid #b8b8b8;
  border-bottom: 0;
}

/* workspace */
.workspace {
  flex: 1;
  display: flex;
  min-height: 0;
  background: #5e5e5e;
}
.caption {
  height: 13px;
  background: #383838;
  display: flex;
  justify-content: flex-end;
  padding-right: 4px;
}
.caption button {
  font-weight: bold;
  line-height: 12px;
  width: 10px;
}
.nav-panel {
  position: relative;
  width: 217px;
  display: flex;
  flex-direction: column;
  border: 1px solid #333;
  border-width: 0 1px;
  background: #5b5b5b;
}
.nav-title {
  height: 22px;
  padding-left: 8px;
  line-height: 19px;
  font-weight: bold;
  background: #484848;
  border: 1px solid #383838;
  border-width: 1px 0;
}
.nav-tools {
  display: flex;
  align-items: center;
  gap: 4px;
  height: 32px;
  padding: 0 1px 3px 4px;
  background: #484848;
  border-bottom: 1px solid #333;
}
.nav-tools svg {
  width: 16px;
  height: 16px;
}
.spacer {
  flex: 1;
}
.framed {
  width: 22px;
  height: 24px;
  display: grid;
  place-items: center;
  border: 1px solid #3a3a3a;
  border-radius: 3px;
  background: #525252;
}
.tree {
  flex: 1;
  padding-top: 1px;
  overflow: hidden;
}
.tree li {
  display: flex;
  align-items: center;
  height: 24px;
  padding-left: 4px;
  gap: 8px;
}
.tree svg {
  width: 16px;
  height: 16px;
}
.tree .leaf {
  padding-left: 53px;
  gap: 6px;
}
.tree .current {
  width: 140px;
  height: 20px;
  margin: 2px 0 2px 50px;
  padding-left: 2px;
  border: 1px solid #46536e;
  background: #5f7ba8;
}
.thumb {
  position: absolute;
  right: 3px;
  top: 263px;
  width: 8px;
  height: 376px;
  border-radius: 4px;
  background: #454545;
}
.mid {
  width: 350px;
  margin-left: 4px;
  display: flex;
  flex-direction: column;
  gap: 5px;
}
.panel {
  border: 1px solid #3a3a3a;
  border-top: 0;
  background: #5a5a5a;
  display: flex;
  flex-direction: column;
}
.comp-panel {
  height: 417px;
}
.prop-panel {
  flex: 1;
}
.panel-tabs {
  display: flex;
  height: 22px;
  background: #484848;
  border-bottom: 1px solid #303030;
}
.panel-tabs button {
  width: 65px;
  height: 21px;
  border-right: 1px solid #303030;
  font-weight: bold;
}
.panel-tabs .active {
  height: 22px;
  font-weight: normal;
  background: #5b5b5b;
}
.comp-tools {
  display: flex;
  align-items: center;
  gap: 11px;
  height: 32px;
  padding: 0 2px 0 1px;
  background: #484848;
  border-bottom: 1px solid #303030;
}
.comp-tools button {
  display: flex;
  align-items: center;
  gap: 2px;
  white-space: nowrap;
}
.comp-tools svg {
  width: 16px;
  height: 16px;
}
.comp-tools .new-btn {
  width: 60px;
  height: 24px;
  padding-left: 2px;
  border: 1px solid #3a3a3a;
  border-radius: 3px;
  justify-content: space-between;
}
.drop {
  width: 11px;
  height: 22px;
  display: grid;
  place-items: center;
  background: #585858;
}
.comp-tools .more {
  width: 14px;
  height: 22px;
  margin-left: auto;
  justify-content: center;
  border: 1px solid #3a3a3a;
  border-radius: 3px;
}
.comp-tools .more svg {
  width: 8px;
  height: 8px;
}
.search {
  display: flex;
  align-items: center;
  height: 19px;
  padding: 0 6px 0 1px;
  background: #484848;
  border-bottom: 1px solid #303030;
}
.search input {
  flex: 1;
}
.search input::placeholder {
  color: #a0a0a0;
  opacity: 1;
}
.search svg {
  width: 12px;
  height: 12px;
}
.comp-list {
  padding-top: 2px;
}
.comp-list li {
  display: flex;
  align-items: center;
  height: 24px;
  padding-left: 50px;
}
.comp-list .root {
  padding-left: 11px;
  gap: 9px;
}
.comp-list svg {
  width: 8px;
  height: 8px;
}
.comp-list span {
  padding: 2px 3px;
}
.comp-list .current span {
  width: 101px;
  background: #5f7ba8;
}

/* property table */
.prop-body {
  flex: 1;
  background: linear-gradient(90deg, #636363 22px, #5a5a5a 22px);
}
table {
  width: 346px;
  border-collapse: collapse;
  table-layout: fixed;
  color: #e4e4e4;
}
th, td {
  height: 21px;
  padding: 0 0 0 3px;
  border: 1px solid #505050;
  border-width: 0 1px 1px 0;
  font-weight: normal;
  text-align: left;
  white-space: nowrap;
}
thead th {
  height: 20px;
  padding: 0;
  text-align: center;
  background: #636363;
}
thead .strong {
  width: 138px;
  font-weight: bold;
  color: #fff;
  background: #484848;
}
.num {
  width: 22px;
  padding: 0;
  text-align: center;
  background: #636363;
}
.extra {
  width: 41px;
}
.current .num {
  font-weight: bold;
  color: #fff;
  background: #484848;
}
.blue {
  color: #7aa2f0;
}
.edit {
  outline: 2px solid #868686;
  outline-offset: -2px;
}
.steel {
  display: inline-block;
  width: 10px;
  height: 12px;
  margin: 0 1px;
  vertical-align: -1px;
}
td input[type="checkbox"] {
  appearance: none;
  display: block;
  width: 14px;
  height: 14px;
  margin: 0 0 0 10px;
  border: 1px solid #3c3c3c;
  border-radius: 2px;
}
.plus {
  width: 13px;
  height: 13px;
  margin-right: 5px;
  border: 1px solid #333;
  border-radius: 2px;
  line-height: 10px;
  vertical-align: 1px;
}
.splitter {
  width: 3px;
  background: linear-gradient(#5e5e5e 370px, #3a3a3a 370px 467px, #5e5e5e 467px);
}

/* drawing */
.canvas {
  flex: 1 1 0;
  min-width: 0;
  height: 100%;
}
.grid {
  stroke: #7d7d7d;
  fill: none;
}
.rebar {
  stroke: #b8605c;
  stroke-opacity: 0.8;
  fill: none;
}
.dim {
  stroke: #0c1;
  fill: none;
}
.note {
  font-family: "Roboto Condensed", "Liberation Sans Narrow", Roboto, sans-serif;
  font-weight: 300;
  font-size: 24px;
}
.green {
  fill: #0e1;
}
.white {
  fill: #fff;
  font-size: 27px;
}
.big-note {
  font-size: 32px;
  font-weight: 200;
}
.axis {
  font-size: 14px;
}
.status {
  height: 5px;
  background: #3b3b3b;
  border-top: 1px solid #2f2f2f;
  display: flex;
  align-items: flex-end;
}
.status span {
  width: 36px;
  height: 3px;
  margin-left: 715px;
  border: 1px solid #2b6fb8;
  border-bottom: 0;
}
```
